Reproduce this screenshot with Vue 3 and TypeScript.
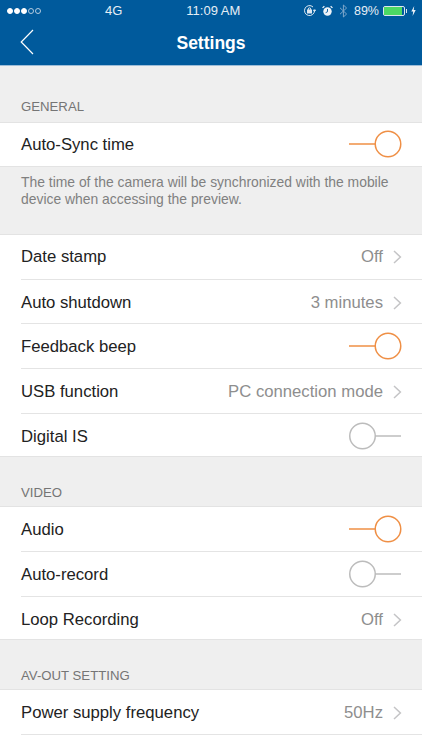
<script setup lang="ts">
type Row = { label: string; value?: string; toggle?: boolean };
const group1: Row[] = [
  { label: 'Date stamp', value: 'Off' },
  { label: 'Auto shutdown', value: '3 minutes' },
  { label: 'Feedback beep', toggle: true },
  { label: 'USB function', value: 'PC connection mode' },
  { label: 'Digital IS', toggle: false },
];
const group2: Row[] = [
  { label: 'Audio', toggle: true },
  { label: 'Auto-record', toggle: false },
  { label: 'Loop Recording', value: 'Off' },
];
const sections = [{ title: 'VIDEO', rows: group2 }];
</script>

<template>
  <div class="page">
    <header class="top">
      <div class="status">
        <div class="signal"><i class="on" /><i class="on" /><i class="on" /><i /><i /></div>
        <span class="net">4G</span>
        <span class="clock">11:09 AM</span>
        <div class="status-right">
          <svg width="13" height="13" viewBox="0 0 13 13" fill="none" stroke="#dfe9f2" stroke-width="1"><path d="M11.5 6.5a5 5 0 1 1-1.5-3.5" /><path d="M12.5 6h-2l1 1.5z" fill="#dfe9f2" /><rect x="4.5" y="6" width="4" height="3" fill="#dfe9f2" /><path d="M5.3 6V5a1.2 1.2 0 0 1 2.4 0v1" /></svg>
          <svg class="alarm" width="11" height="12" viewBox="0 0 12 12"><circle cx="6" cy="6.5" r="4.6" fill="#eef3f8" /><path d="M6 3.8v3l-2 1" stroke="#005a9c" stroke-width="1" fill="none" /><path d="M.6 2.6 2.6.8M11.4 2.6 9.4.8" stroke="#eef3f8" stroke-width="1.4" /></svg>
          <svg class="bt" width="9" height="14" viewBox="0 0 9 14" fill="none" stroke="#7fa8cb" stroke-width="1"><path d="M1 3.8 7.6 10 4.4 13V1l3.2 3L1 10.2" /></svg>
          <span class="pct">89%</span>
          <div class="battery"><div class="level" /></div>
          <svg class="bolt" width="5" height="10" viewBox="0 0 5 10"><path d="M3.2 0 .3 5.6h1.9L1.6 10l3.1-6H2.7z" fill="#eef3f8" /></svg>
        </div>
      </div>
      <div class="nav">
        <svg class="back" width="14" height="26" viewBox="0 0 14 26" fill="none" stroke="#fff" stroke-width="1.2"><path d="M13 1 1.2 13 13 25" /></svg>
        <span class="title">Settings</span>
      </div>
    </header>

    <div class="sec-label first">GENERAL</div>
    <div class="group">
      <div class="row">
        <span>Auto-Sync time</span>
        <svg class="toggle" width="54" height="28" viewBox="0 0 54 28" fill="none" stroke="#ef8f45" stroke-width="1.5"><path d="M1 14h26" /><circle cx="40" cy="14" r="12.75" fill="#fff" /></svg>
      </div>
    </div>
    <p class="note">The time of the camera will be synchronized with the mobile<br />device when accessing the preview.</p>

    <div class="group">
      <div v-for="r in group1" :key="r.label" class="row">
        <span>{{ r.label }}</span>
        <svg v-if="r.toggle === true" class="toggle" width="54" height="28" viewBox="0 0 54 28" fill="none" stroke="#ef8f45" stroke-width="1.5"><path d="M1 14h26" /><circle cx="40" cy="14" r="12.75" fill="#fff" /></svg>
        <svg v-else-if="r.toggle === false" class="toggle" width="54" height="28" viewBox="0 0 54 28" fill="none" stroke="#bcbcbc" stroke-width="1.5"><path d="M27 14h26" /><circle cx="14.5" cy="14" r="12.75" fill="#fff" /></svg>
        <span v-else class="val">{{ r.value }}
          <svg width="9" height="14" viewBox="0 0 9 14" fill="none" stroke="#c4c4c6" stroke-width="1.5"><path d="M1 1l6.4 6L1 13" /></svg>
        </span>
      </div>
    </div>

    <template v-for="s in sections" :key="s.title">
      <div class="sec-label">{{ s.title }}</div>
      <div class="group">
        <div v-for="r in s.rows" :key="r.label" class="row">
          <span>{{ r.label }}</span>
          <svg v-if="r.toggle === true" class="toggle" width="54" height="28" viewBox="0 0 54 28" fill="none" stroke="#ef8f45" stroke-width="1.5"><path d="M1 14h26" /><circle cx="40" cy="14" r="12.75" fill="#fff" /></svg>
          <svg v-else-if="r.toggle === false" class="toggle" width="54" height="28" viewBox="0 0 54 28" fill="none" stroke="#bcbcbc" stroke-width="1.5"><path d="M27 14h26" /><circle cx="14.5" cy="14" r="12.75" fill="#fff" /></svg>
          <span v-else class="val">{{ r.value }}
            <svg width="9" height="14" viewBox="0 0 9 14" fill="none" stroke="#c4c4c6" stroke-width="1.5"><path d="M1 1l6.4 6L1 13" /></svg>
          </span>
        </div>
      </div>
    </template>

    <div class="sec-label">AV-OUT SETTING</div>
    <div class="group">
      <div class="row">
        <span>Power supply frequency</span>
        <span class="val">50Hz
          <svg width="9" height="14" viewBox="0 0 9 14" fill="none" stroke="#c4c4c6" stroke-width="1.5"><path d="M1 1l6.4 6L1 13" /></svg>
        </span>
      </div>
      <div class="row" />
    </div>
  </div>
</template>

<style scoped>
.page {
  width: 422px;
  height: 750px;
  overflow: hidden;
  background: #efefef;
  font-family: "Liberation Sans", Arial, sans-serif;
  color: #333;
}
.top {
  height: 66px;
  background: #005a9c;
  color: #fff;
  border-bottom: 1px solid #9dbdd8;
  box-sizing: border-box;
}
.status {
  height: 21px;
  display: flex;
  align-items: center;
  padding: 0 6px 0 7px;
  font-size: 13px;
  color: #e6eef5;
}
.signal {
  display: flex;
  gap: 1px;
  width: 35px;
}
.signal i {
  width: 6px;
  height: 6px;
  box-sizing: border-box;
  border: 1px solid #b4cbdf;
  border-radius: 50%;
}
.signal i.on {
  background: #fff;
  border-color: #fff;
}
.net {
  margin-left: 63px;
}
.clock {
  margin-left: 64px;
}
.status-right {
  margin-left: auto;
  display: flex;
  align-items: center;
  gap: 4px;
}
.alarm {
  margin-left: 2px;
}
.bt {
  margin-left: 2px;
}
.pct {
  margin-left: 2px;
  font-size: 12.5px;
}
.battery {
  width: 22px;
  height: 10px;
  border: 1px solid #dbe6ef;
  border-radius: 2px;
  box-sizing: border-box;
  position: relative;
}
.battery::after {
  content: "";
  position: absolute;
  right: -3px;
  top: 2px;
  width: 1.5px;
  height: 4px;
  background: #dbe6ef;
}
.level {
  width: 89%;
  height: 100%;
  background: #4cd964;
}
.bolt {
  margin-left: 2px;
}
.nav {
  position: relative;
  height: 44px;
  display: flex;
  align-items: center;
  justify-content: center;
}
.back {
  position: absolute;
  left: 20px;
  top: 8px;
}
.title {
  font-size: 17.5px;
  font-weight: 700;
}
.sec-label {
  height: 49px;
  box-sizing: border-box;
  display: flex;
  align-items: flex-end;
  padding: 0 21px 6px;
  font-size: 13.2px;
  line-height: 14px;
  color: #757575;
}
.sec-label.first {
  height: 56px;
  padding-bottom: 8px;
}
.group {
  background: #fff;
  box-shadow: inset 0 1px #e3e3e3, inset 0 -1px #e3e3e3;
}
.row {
  height: 44.7px;
  box-sizing: border-box;
  display: flex;
  align-items: center;
  justify-content: space-between;
  margin-left: 21px;
  padding-right: 20px;
  font-size: 16.7px;
  color: #222;
}
.row > span {
  padding-top: 2px;
}
.row + .row {
  border-top: 1px solid #e4e4e4;
}
.val {
  display: flex;
  align-items: center;
  gap: 10px;
  color: #8e8e8e;
}
.toggle {
  display: block;
}
.note {
  margin: 0;
  height: 67.3px;
  box-sizing: border-box;
  padding: 7px 21px 0;
  font-size: 13.9px;
  line-height: 17px;
  color: #808080;
}
</style>
